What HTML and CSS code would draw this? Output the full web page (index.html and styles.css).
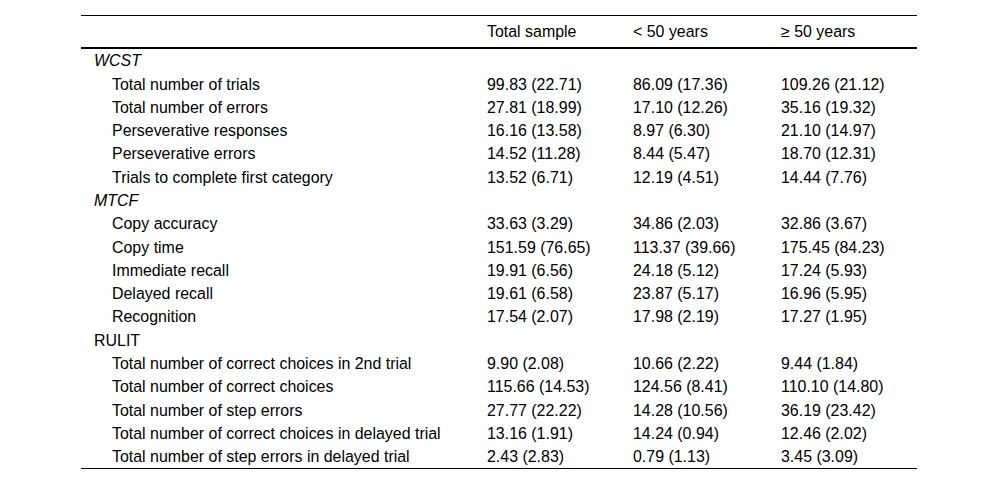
FILE: index.html
```html
<!DOCTYPE html>
<html>
<head>
<meta charset="utf-8">
<link rel="stylesheet" href="styles.css">
</head>
<body>
<div class="page">
<table class="stats">
  <colgroup>
    <col class="c-label"><col class="c-total"><col class="c-young"><col class="c-old">
  </colgroup>
  <thead>
    <tr><th></th><th>Total sample</th><th>&lt; 50 years</th><th>≥ 50 years</th></tr>
  </thead>
  <tbody>
    <tr class="cat"><td class="it">WCST</td><td></td><td></td><td></td></tr>
    <tr><td class="sub">Total number of trials</td><td>99.83 (22.71)</td><td>86.09 (17.36)</td><td>109.26 (21.12)</td></tr>
    <tr><td class="sub">Total number of errors</td><td>27.81 (18.99)</td><td>17.10 (12.26)</td><td>35.16 (19.32)</td></tr>
    <tr><td class="sub">Perseverative responses</td><td>16.16 (13.58)</td><td>8.97 (6.30)</td><td>21.10 (14.97)</td></tr>
    <tr><td class="sub">Perseverative errors</td><td>14.52 (11.28)</td><td>8.44 (5.47)</td><td>18.70 (12.31)</td></tr>
    <tr><td class="sub">Trials to complete first category</td><td>13.52 (6.71)</td><td>12.19 (4.51)</td><td>14.44 (7.76)</td></tr>
    <tr class="cat"><td class="it">MTCF</td><td></td><td></td><td></td></tr>
    <tr><td class="sub">Copy accuracy</td><td>33.63 (3.29)</td><td>34.86 (2.03)</td><td>32.86 (3.67)</td></tr>
    <tr><td class="sub">Copy time</td><td>151.59 (76.65)</td><td>113.37 (39.66)</td><td>175.45 (84.23)</td></tr>
    <tr><td class="sub">Immediate recall</td><td>19.91 (6.56)</td><td>24.18 (5.12)</td><td>17.24 (5.93)</td></tr>
    <tr><td class="sub">Delayed recall</td><td>19.61 (6.58)</td><td>23.87 (5.17)</td><td>16.96 (5.95)</td></tr>
    <tr><td class="sub">Recognition</td><td>17.54 (2.07)</td><td>17.98 (2.19)</td><td>17.27 (1.95)</td></tr>
    <tr class="cat"><td>RULIT</td><td></td><td></td><td></td></tr>
    <tr><td class="sub">Total number of correct choices in 2nd trial</td><td>9.90 (2.08)</td><td>10.66 (2.22)</td><td>9.44 (1.84)</td></tr>
    <tr><td class="sub">Total number of correct choices</td><td>115.66 (14.53)</td><td>124.56 (8.41)</td><td>110.10 (14.80)</td></tr>
    <tr><td class="sub">Total number of step errors</td><td>27.77 (22.22)</td><td>14.28 (10.56)</td><td>36.19 (23.42)</td></tr>
    <tr><td class="sub">Total number of correct choices in delayed trial</td><td>13.16 (1.91)</td><td>14.24 (0.94)</td><td>12.46 (2.02)</td></tr>
    <tr><td class="sub">Total number of step errors in delayed trial</td><td>2.43 (2.83)</td><td>0.79 (1.13)</td><td>3.45 (3.09)</td></tr>
  </tbody>
</table>
</div>
</body>
</html>
```

FILE: styles.css
```css
html, body {
  margin: 0;
  padding: 0;
  background: #fff;
}
.page {
  padding: 15px 0 0 81px;
}
.stats {
  width: 836px;
  border-collapse: collapse;
  table-layout: fixed;
  font-family: "Liberation Sans", Arial, sans-serif;
  font-size: 15.95px;
  color: #000;
  border-top: 1px solid #000;
  border-bottom: 1px solid #000;
}
.c-label { width: 393px; }
.c-total { width: 146px; }
.c-young { width: 148px; }
.c-old { width: 149px; }
.stats th {
  font-weight: normal;
  text-align: left;
  line-height: 17.3px;
  padding: 7px 0 6.7px 13px;
  border-bottom: 2px solid #000;
  white-space: nowrap;
}
.stats td {
  line-height: 17.3px;
  padding: 3.3px 0 2.7px 13px;
  white-space: nowrap;
  text-align: left;
}
.stats td.sub {
  padding-left: 31px;
}
.stats td.it {
  font-style: italic;
}
```
